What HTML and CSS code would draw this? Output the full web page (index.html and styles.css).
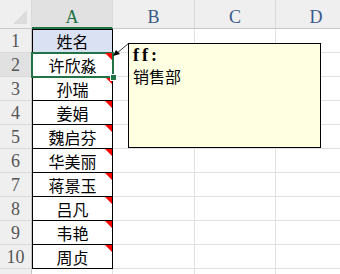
FILE: index.html
```html
<!DOCTYPE html>
<html>
<head>
<meta charset="utf-8">
<link rel="stylesheet" href="styles.css">
</head>
<body>
<div class="sheet">
  <div class="grid">
    <div class="corner"><span class="tri"></span></div>
    <div class="colhead sel">A</div>
    <div class="colhead">B</div>
    <div class="colhead">C</div>
    <div class="colhead">D</div>

    <div class="rowhead">1</div>
    <div class="cell tbl first hdr">姓名</div>
    <div class="cell"></div><div class="cell"></div><div class="cell"></div>

    <div class="rowhead sel">2</div>
    <div class="cell tbl note active">许欣淼</div>
    <div class="cell"></div><div class="cell"></div><div class="cell"></div>

    <div class="rowhead">3</div>
    <div class="cell tbl note">孙瑞</div>
    <div class="cell"></div><div class="cell"></div><div class="cell"></div>

    <div class="rowhead">4</div>
    <div class="cell tbl note">姜娟</div>
    <div class="cell"></div><div class="cell"></div><div class="cell"></div>

    <div class="rowhead">5</div>
    <div class="cell tbl note">魏启芬</div>
    <div class="cell"></div><div class="cell"></div><div class="cell"></div>

    <div class="rowhead">6</div>
    <div class="cell tbl note">华美丽</div>
    <div class="cell"></div><div class="cell"></div><div class="cell"></div>

    <div class="rowhead">7</div>
    <div class="cell tbl note">蒋景玉</div>
    <div class="cell"></div><div class="cell"></div><div class="cell"></div>

    <div class="rowhead">8</div>
    <div class="cell tbl note">吕凡</div>
    <div class="cell"></div><div class="cell"></div><div class="cell"></div>

    <div class="rowhead">9</div>
    <div class="cell tbl note">韦艳</div>
    <div class="cell"></div><div class="cell"></div><div class="cell"></div>

    <div class="rowhead">10</div>
    <div class="cell tbl note">周贞</div>
    <div class="cell"></div><div class="cell"></div><div class="cell"></div>

    <div class="rowhead"></div>
    <div class="cell"></div><div class="cell"></div><div class="cell"></div><div class="cell"></div>
  </div>

  <svg class="pointer" width="20" height="16" viewBox="0 0 20 16">
    <line x1="16" y1="1" x2="3" y2="12" stroke="#333" stroke-width="1"/>
    <polygon points="0,14 3,8 7,12" fill="#000"/>
  </svg>

  <div class="comment">
    <div class="author">ff:</div>
    <div class="body">销售部</div>
  </div>
</div>
</body>
</html>
```

FILE: styles.css
```css
html, body {
  margin: 0;
  padding: 0;
  background: #fff;
  overflow: hidden;
}

.sheet {
  position: relative;
  width: 340px;
  height: 274px;
  overflow: hidden;
}

.grid {
  display: grid;
  grid-template-columns: 32px 81px 82px 81px 81px;
  grid-template-rows: 29px repeat(11, 24px);
  font-family: "Noto Sans CJK SC", sans-serif;
}

.corner {
  position: relative;
  background: #efefef;
  border-right: 1px solid #d9d9d9;
  border-bottom: 1px solid #c8c8c8;
  box-sizing: border-box;
}

.corner .tri {
  position: absolute;
  right: 4px;
  bottom: 4px;
  width: 0;
  height: 0;
  border-left: 14px solid transparent;
  border-bottom: 14px solid #dcdcdc;
}

.colhead {
  background: #efefef;
  border-right: 1px solid #dadada;
  border-bottom: 1px solid #c6c6c6;
  box-sizing: border-box;
  display: flex;
  align-items: center;
  justify-content: center;
  padding-top: 7px;
  font-family: "Liberation Serif", serif;
  font-size: 18px;
  color: #3a5a8a;
}

.colhead.sel {
  background: #e1e1e1;
  color: #217346;
  border-bottom: 2px solid #217346;
}

.rowhead {
  background: #efefef;
  border-right: 1px solid #c6c6c6;
  border-bottom: 1px solid #dadada;
  box-sizing: border-box;
  display: flex;
  align-items: center;
  justify-content: center;
  padding-top: 1px;
  font-family: "Liberation Serif", serif;
  font-size: 18px;
  color: #555;
}

.rowhead.sel {
  background: #e1e1e1;
}

.cell {
  position: relative;
  border-right: 1px solid #e1e1e1;
  border-bottom: 1px solid #e1e1e1;
  box-sizing: border-box;
  display: flex;
  align-items: center;
  justify-content: center;
  font-size: 16px;
  color: #000;
  line-height: 1;
}

.cell.tbl {
  border-right: 1px solid #000;
  border-bottom: 1px solid #000;
  border-left: 1px solid #000;
}

.cell.first {
  border-top: 1px solid #000;
}

.cell.hdr {
  background: #d9e1f2;
}

.cell.note::after {
  content: "";
  position: absolute;
  top: 0;
  right: 0;
  width: 0;
  height: 0;
  border-top: 7px solid #ff0000;
  border-left: 7px solid transparent;
}

.cell.active {
  outline: 2px solid #217346;
  outline-offset: -1px;
  z-index: 2;
}

.cell.active::before {
  content: "";
  position: absolute;
  right: -5px;
  bottom: -5px;
  width: 5px;
  height: 5px;
  background: #217346;
  border: 1px solid #fff;
  z-index: 3;
}

.pointer {
  position: absolute;
  left: 113px;
  top: 42px;
  z-index: 4;
}

.comment {
  position: absolute;
  left: 128px;
  top: 43px;
  width: 193px;
  height: 105px;
  box-sizing: border-box;
  background: #ffffe1;
  border: 1px solid #000;
  padding: 2px 4px;
  z-index: 5;
}

.author {
  font-family: "Liberation Serif", serif;
  font-weight: bold;
  font-size: 18px;
  letter-spacing: 3px;
  line-height: 18px;
  color: #000;
}

.body {
  margin-top: 2px;
  font-family: "Noto Sans CJK SC", sans-serif;
  font-size: 16px;
  line-height: 20px;
  color: #000;
}
```
